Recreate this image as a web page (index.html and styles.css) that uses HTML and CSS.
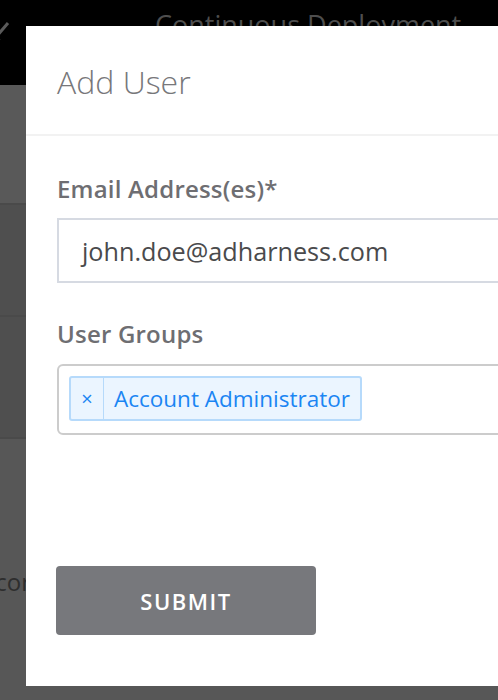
FILE: index.html
```html
<!DOCTYPE html>
<html>
<head>
<meta charset="utf-8">
<link rel="stylesheet" href="styles.css">
</head>
<body>
<div class="page">
  <header class="topbar">
    <svg class="back" width="20" height="40" viewBox="0 0 20 40"><polyline points="8,23 -4,37 8,51" fill="none" stroke="#5a5a5a" stroke-width="3"/></svg>
    <span class="topbar-title">Continuous Deployment</span>
  </header>
  <div class="row row-light"></div>
  <div class="row row-dark"></div>
  <div class="row row-dark"></div>
  <div class="row row-bottom"><span class="bg-text">Recor</span></div>
</div>

<div class="modal">
  <div class="modal-header">
    <h1 class="modal-title">Add User</h1>
  </div>
  <div class="modal-body">
    <label class="field-label">Email Address(es)*</label>
    <div class="text-input">john.doe@adharness.com</div>
    <label class="field-label groups-label">User Groups</label>
    <div class="multi-select">
      <span class="tag"><span class="tag-remove">×</span><span class="tag-label">Account Administrator</span></span>
    </div>
    <button class="submit">SUBMIT</button>
  </div>
</div>
</body>
</html>
```

FILE: styles.css
```css
html, body {
  margin: 0;
  padding: 0;
}
body {
  width: 498px;
  height: 700px;
  overflow: hidden;
  background: #575757;
  font-family: "Open Sans", Lato, sans-serif;
  position: relative;
}
.page {
  display: flex;
  flex-direction: column;
}
.topbar {
  height: 85px;
  background: #000;
  position: relative;
  display: flex;
  align-items: flex-start;
}
.back {
  position: absolute;
  left: 0;
  top: 0;
}
.topbar-title {
  margin-left: 155px;
  margin-top: 6px;
  font-size: 27px;
  color: #4e4e4e;
  white-space: nowrap;
}
.row {
  border-bottom: 2px solid #4a4a4a;
}
.row-light {
  height: 118px;
  background: #595959;
}
.row-dark {
  height: 110px;
  background: #4f4f4f;
}
.row-dark + .row-dark {
  height: 120px;
}
.row-bottom {
  border-bottom: none;
  height: 260px;
  background: #575757;
  position: relative;
}
.bg-text {
  position: absolute;
  left: -33px;
  top: 126px;
  font-size: 24px;
  color: #2e2e2e;
}
.modal {
  position: absolute;
  left: 26px;
  top: 26px;
  width: 600px;
  height: 660px;
  background: #fff;
}
.modal-header {
  height: 110px;
  border-bottom: 2px solid #f2f2f2;
  padding-left: 31px;
  box-sizing: border-box;
  display: flex;
  align-items: flex-start;
}
.modal-title {
  margin: 36px 0 0;
  font-size: 32px;
  font-weight: 300;
  color: #77777a;
  line-height: 40px;
}
.modal-body {
  padding: 38px 0 0 31px;
  display: flex;
  flex-direction: column;
  align-items: flex-start;
}
.field-label {
  font-size: 24px;
  font-weight: 600;
  color: #6e6e72;
  line-height: 30px;
  letter-spacing: 0.2px;
}
.text-input {
  margin-top: 14px;
  width: 560px;
  height: 65px;
  box-sizing: border-box;
  border: 2px solid #d6dae2;
  padding-left: 23px;
  display: flex;
  align-items: center;
  font-size: 25.2px;
  color: #4a4a4c;
}
.groups-label {
  margin-top: 36px;
}
.multi-select {
  margin-top: 15px;
  width: 560px;
  height: 71px;
  box-sizing: border-box;
  border: 2px solid #cccccc;
  border-radius: 6px;
  padding: 10px;
  display: flex;
  align-items: flex-start;
}
.tag {
  display: flex;
  height: 45px;
  box-sizing: border-box;
  border: 2px solid #b6dafb;
  border-radius: 3px;
  background: #ebf5ff;
  color: #1b85f3;
}
.tag-remove {
  width: 32px;
  display: flex;
  align-items: center;
  justify-content: center;
  border-right: 1px solid #b6dafb;
  font-size: 20px;
}
.tag-label {
  display: flex;
  align-items: center;
  padding: 0 10px 0 10px;
  font-size: 22.5px;
}
.submit {
  margin-top: 131px;
  margin-left: -1px;
  width: 260px;
  height: 69px;
  border: none;
  border-radius: 4px;
  background: #77787c;
  color: #fff;
  font-family: "Open Sans", Lato, sans-serif;
  font-size: 22px;
  font-weight: 600;
  letter-spacing: 1.5px;
}
```
